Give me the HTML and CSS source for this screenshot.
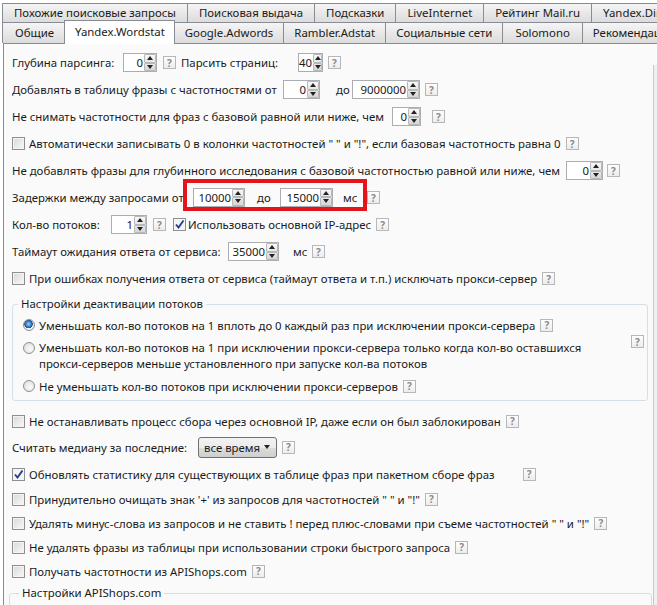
FILE: index.html
```html
<!DOCTYPE html>
<html lang="ru">
<head>
    <meta charset="UTF-8">
    <title>Настройки — Yandex.Wordstat</title>
    <link rel="stylesheet" href="styles.css">
</head>
<body>
    <div class="tabs">
        <div class="tab-row back">
            <div class="tab">Похожие поисковые запросы</div>
            <div class="tab">Поисковая выдача</div>
            <div class="tab">Подсказки</div>
            <div class="tab">LiveInternet</div>
            <div class="tab">Рейтинг Mail.ru</div>
            <div class="tab">Yandex.Direct</div>
        </div>
        <div class="tab-row front">
            <div class="tab wide">Общие</div>
            <div class="tab active">Yandex.Wordstat</div>
            <div class="tab">Google.Adwords</div>
            <div class="tab">Rambler.Adstat</div>
            <div class="tab">Социальные сети</div>
            <div class="tab wide">Solomono</div>
            <div class="tab">Рекомендации</div>
        </div>
    </div>

    <div class="page">
        <div class="scroll-track"></div>

        <div class="row">
            <span class="lbl w-depth">Глубина парсинга:</span>
            <span class="spin s34"><span class="val">0</span><span class="arrows"><i></i><i></i></span></span>
            <span class="help">?</span>
            <span class="lbl w-pages">Парсить страниц:</span>
            <span class="spin s25"><span class="val">40</span><span class="arrows"><i></i><i></i></span></span>
            <span class="help ml5">?</span>
        </div>

        <div class="row">
            <span class="lbl w-add">Добавлять в таблицу фразы с частотностями от</span>
            <span class="spin s37"><span class="val">0</span><span class="arrows"><i></i><i></i></span></span>
            <span class="unit to">до</span>
            <span class="spin s68"><span class="val">9000000</span><span class="arrows"><i></i><i></i></span></span>
            <span class="help ml5">?</span>
        </div>

        <div class="row">
            <span class="lbl w-base">Не снимать частотности для фраз с базовой равной или ниже, чем</span>
            <span class="spin s29"><span class="val">0</span><span class="arrows"><i></i><i></i></span></span>
            <span class="help ml11">?</span>
        </div>

        <div class="row">
            <span class="check"></span>
            <span class="txt">Автоматически записывать 0 в колонки частотностей " " и "!", если базовая частотность равна 0</span>
            <span class="help ml5">?</span>
        </div>

        <div class="row">
            <span class="lbl w-deep">Не добавлять фразы для глубинного исследования с базовой частотностью равной или ниже, чем</span>
            <span class="spin s37"><span class="val">0</span><span class="arrows"><i></i><i></i></span></span>
            <span class="help ml4">?</span>
        </div>

        <div class="row">
            <span class="lbl w-delay">Задержки между запросами от</span>
            <span class="mark">
                <span class="spin s52"><span class="val">10000</span><span class="arrows"><i></i><i></i></span></span>
                <span class="unit to2">до</span>
                <span class="spin s53"><span class="val">15000</span><span class="arrows"><i></i><i></i></span></span>
                <span class="unit ms">мс</span>
            </span>
            <span class="help ml0">?</span>
        </div>

        <div class="row">
            <span class="lbl w-threads">Кол-во потоков:</span>
            <span class="spin s36"><span class="val">1</span><span class="arrows"><i></i><i></i></span></span>
            <span class="help">?</span>
            <span class="check checked ml7"></span>
            <span class="txt tight">Использовать основной IP-адрес</span>
            <span class="help ml5">?</span>
        </div>

        <div class="row">
            <span class="lbl w-timeout">Таймаут ожидания ответа от сервиса:</span>
            <span class="spin s51"><span class="val">35000</span><span class="arrows"><i></i><i></i></span></span>
            <span class="unit ms2">мс</span>
            <span class="help ml0">?</span>
        </div>

        <div class="row">
            <span class="check"></span>
            <span class="txt">При ошибках получения ответа от сервиса (таймаут ответа и т.п.) исключать прокси-сервер</span>
            <span class="help ml5">?</span>
        </div>

        <fieldset class="group">
            <legend>Настройки деактивации потоков</legend>
            <div class="opt first">
                <span class="radio on"></span>
                <span class="txt">Уменьшать кол-во потоков на 1 вплоть до 0 каждый раз при исключении прокси-сервера</span>
                <span class="help ml5">?</span>
            </div>
            <div class="opt multi">
                <span class="radio"></span>
                <span class="txt">Уменьшать кол-во потоков на 1 при исключении прокси-сервера только когда кол-во оставшихся<br>прокси-серверов меньше установленного при запуске кол-ва потоков</span>
                <span class="help side">?</span>
            </div>
            <div class="opt last">
                <span class="radio"></span>
                <span class="txt">Не уменьшать кол-во потоков при исключении прокси-серверов</span>
                <span class="help ml5">?</span>
            </div>
        </fieldset>

        <div class="row short after-group">
            <span class="check"></span>
            <span class="txt">Не останавливать процесс сбора через основной IP, даже если он был заблокирован</span>
            <span class="help ml5">?</span>
        </div>

        <div class="row tall">
            <span class="lbl w-median">Считать медиану за последние:</span>
            <span class="select">все время<b></b></span>
            <span class="help ml5">?</span>
        </div>

        <div class="row mid">
            <span class="check checked"></span>
            <span class="txt">Обновлять статистику для существующих в таблице фраз при пакетном сборе фраз</span>
            <span class="help ml28">?</span>
        </div>

        <div class="row short">
            <span class="check"></span>
            <span class="txt">Принудительно очищать знак '+' из запросов для частотностей " " и "!"</span>
            <span class="help ml5">?</span>
        </div>

        <div class="row short">
            <span class="check"></span>
            <span class="txt">Удалять минус-слова из запросов и не ставить ! перед плюс-словами при съеме частотностей " " и "!"</span>
            <span class="help ml5">?</span>
        </div>

        <div class="row short">
            <span class="check"></span>
            <span class="txt">Не удалять фразы из таблицы при использовании строки быстрого запроса</span>
            <span class="help ml5">?</span>
        </div>

        <div class="row short">
            <span class="check"></span>
            <span class="txt">Получать частотности из APIShops.com</span>
            <span class="help ml5">?</span>
        </div>

        <fieldset class="group shops">
            <legend>Настройки APIShops.com</legend>
        </fieldset>
    </div>
</body>
</html>
```

FILE: styles.css
```css
* {
    box-sizing: border-box;
}
body {
    margin: 0;
    width: 657px;
    height: 605px;
    overflow: hidden;
    background: #fff;
    font-family: "Noto Sans", sans-serif;
    font-size: 11.4px;
    color: #1a1a1a;
}

/* tabs */
.tabs {
    padding-left: 2px;
}
.tab-row {
    display: flex;
    white-space: nowrap;
    overflow: hidden;
}
.tab-row.back {
    margin-top: 3px;
    height: 19px;
}
.tab-row.front {
    position: relative;
    z-index: 1;
    margin-top: -2px;
    padding-top: 2px;
    height: 24px;
    align-items: flex-start;
}
.tab {
    flex-shrink: 0;
    height: 19px;
    line-height: 17px;
    padding: 0 11px;
    border: 1px solid #898c95;
    border-bottom: none;
    margin-right: -1px;
    background: linear-gradient(#f5f5f5, #e8e8e8 50%, #dcdcdc);
}
.front .tab {
    height: 21px;
    line-height: 19px;
    padding: 0 10px;
}
.front .tab.wide {
    padding: 0 12px;
}
.front .tab.active {
    position: relative;
    z-index: 2;
    height: 24px;
    margin: -2px -1px 0 -2px;
    padding: 0 9px 0 10px;
    line-height: 22px;
    background: #fff;
}

/* page */
.page {
    position: relative;
    margin-top: -1px;
    margin-left: 3px;
    height: 563px;
    padding: 5px 0 0 8px;
    background: #fafafa;
    border-left: 1px solid #898c95;
    border-top: 1px solid #898c95;
}
.scroll-track {
    position: absolute;
    right: 0;
    top: 21px;
    bottom: 0;
    width: 4px;
    border-left: 1px solid #c9c9c9;
    background: #f0f0f0;
}

.row {
    display: flex;
    align-items: center;
    height: 27px;
    white-space: nowrap;
}
.row.short {
    height: 24px;
}
.row.mid {
    height: 26px;
}
.row.tall {
    height: 28px;
}
.row.after-group {
    margin-top: 8px;
}

.lbl {
    flex-shrink: 0;
    overflow: hidden;
}
.w-depth { width: 111px; }
.w-pages { width: 117px; margin-left: 5px; }
.w-add { width: 271px; }
.w-base { width: 380px; }
.w-deep { width: 554px; }
.w-delay { width: 181px; }
.w-threads { width: 99px; }
.w-timeout { width: 216px; }
.w-median { width: 186px; }

.unit {
    flex-shrink: 0;
}
.to { width: 16px; margin-left: 16px; }
.to2 { width: 23px; margin-left: 12px; }
.ms { width: 17px; margin-left: 10px; }
.ms2 { width: 19px; margin-left: 14px; }

/* spin boxes */
.spin {
    display: inline-flex;
    flex-shrink: 0;
    height: 19px;
    border: 1px solid #abadb3;
    background: #fff;
}
.spin .val {
    flex: 1;
    text-align: right;
    line-height: 17px;
    padding-right: 1px;
}
.arrows {
    width: 12px;
    display: flex;
    flex-direction: column;
}
.arrows i {
    flex: 1;
    display: flex;
    align-items: center;
    justify-content: center;
    border: 1px solid #b8b8b8;
    border-radius: 1px;
    background: linear-gradient(#f8f8f8, #e8e8e8);
}
.arrows i + i {
    background: linear-gradient(#e8e8e8, #d6d6d6);
}
.arrows i::after {
    content: "";
    border-left: 3.5px solid transparent;
    border-right: 3.5px solid transparent;
    border-bottom: 4px solid #222;
}
.arrows i + i::after {
    border-bottom: none;
    border-top: 4px solid #222;
}
.s25 { width: 25px; }
.s29 { width: 29px; }
.s34 { width: 34px; }
.s36 { width: 36px; }
.s37 { width: 37px; }
.s51 { width: 51px; }
.s52 { width: 52px; }
.s53 { width: 53px; }
.s68 { width: 68px; }

/* help button */
.help {
    display: inline-flex;
    flex-shrink: 0;
    align-items: center;
    justify-content: center;
    width: 13px;
    height: 13px;
    margin-left: 6px;
    border: 1px solid #b7b7b7;
    background: linear-gradient(#fdfdfd, #ededed);
    color: #8a8a8a;
    font-size: 10px;
    font-weight: bold;
    line-height: 1;
}
.ml0 { margin-left: 0; }
.ml4 { margin-left: 4px; }
.ml5 { margin-left: 5px; }
.ml7 { margin-left: 7px; }
.ml11 { margin-left: 11px; }
.ml28 { margin-left: 28px; }

/* checkbox / radio */
.check {
    flex-shrink: 0;
    width: 13px;
    height: 13px;
    border: 1px solid #8f8f8f;
    background: linear-gradient(135deg, #d8d8d8, #f9f9f9);
    box-shadow: inset 0 0 0 1px #f4f4f4;
}
.check.checked {
    background: #f4f4f4 url("data:image/svg+xml,%3Csvg xmlns='http://www.w3.org/2000/svg' width='11' height='11'%3E%3Cpath d='M2 5.5 L4.5 8.5 L9.5 1.5' fill='none' stroke='%23263b8c' stroke-width='1.9'/%3E%3C/svg%3E") center/11px 11px no-repeat;
}
.txt {
    margin-left: 4px;
}
.txt.tight {
    margin-left: 2px;
}
.radio {
    flex-shrink: 0;
    width: 12px;
    height: 12px;
    border-radius: 50%;
    border: 1px solid #8e8f8f;
    background: radial-gradient(circle at 60% 60%, #fbfbfb, #d8d8d8);
}
.radio.on {
    background: radial-gradient(circle at 45% 40%, #a9d3f7 0, #3c86d2 2.5px, #1f4f95 4px, #f4f4f4 4.5px, #d9d9d9);
}

/* group boxes */
.group {
    margin: 4px 0 0 0;
    width: 636px;
    padding: 0 3px 3px 10px;
    border: 1px solid #d5dfe5;
    border-radius: 3px;
}
.group legend {
    margin-left: -5px;
    padding: 0 3px;
    line-height: 16px;
}
.opt {
    display: flex;
    align-items: center;
    min-height: 22px;
    white-space: nowrap;
}
.opt.first {
    margin-top: 2px;
}
.opt.multi {
    margin-top: 4px;
    align-items: flex-start;
    line-height: 16px;
}
.opt.multi .radio {
    margin-top: 2px;
}
.opt.multi .side {
    margin-left: auto;
    margin-top: -5px;
}
.opt.last {
    margin-top: 3px;
}
.group.shops {
    margin: 2px 0 0 -3px;
    width: 643px;
    height: 40px;
}
.group.shops legend {
    margin-left: -1px;
}

/* combo box */
.select {
    display: inline-flex;
    align-items: center;
    flex-shrink: 0;
    width: 79px;
    height: 21px;
    padding-left: 5px;
    border: 1px solid #707070;
    border-radius: 3px;
    background: linear-gradient(#f2f2f2, #ebebeb 50%, #dddddd 50%, #cfcfcf);
}
.select b {
    margin-left: auto;
    margin-right: 6px;
    border-left: 3.5px solid transparent;
    border-right: 3.5px solid transparent;
    border-top: 4px solid #222;
}

/* red highlight around the delay fields */
.mark {
    display: flex;
    align-items: center;
    flex-shrink: 0;
    margin: -6px 0 0 -10px;
    padding: 5px 3px 0 6px;
    border: 4px solid #e3141b;
}
```
